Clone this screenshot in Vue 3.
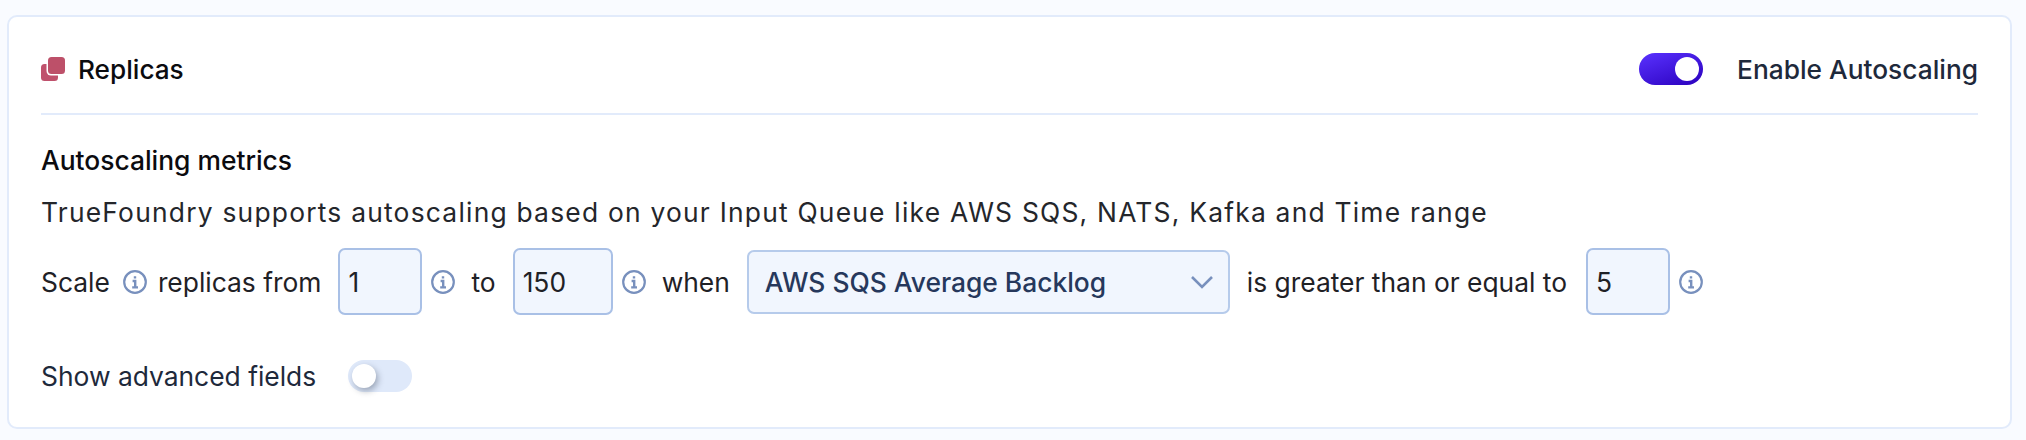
<script setup>
</script>

<template>
  <div class="page">
    <section class="card">
      <header class="head">
        <div class="title">
          <svg class="stack" width="24" height="24" viewBox="0 0 24 24">
            <rect x="0" y="7" width="17" height="17" rx="3.5" fill="#bf516c" />
            <rect x="5.5" y="-1.5" width="20" height="20" rx="4.5" fill="#fff" />
            <rect x="7" y="0" width="17" height="17" rx="3.5" fill="#bd5069" />
          </svg>
          <span>Replicas</span>
        </div>
        <div class="auto">
          <span class="toggle on"><i></i></span>
          <span>Enable Autoscaling</span>
        </div>
      </header>
      <h3>Autoscaling metrics</h3>
      <p class="desc">TrueFoundry supports autoscaling based on your Input Queue like AWS SQS, NATS, Kafka and Time range</p>
      <div class="rule">
        <span class="w-scale">Scale</span>
        <svg class="info" viewBox="0 0 24 24"><circle cx="12" cy="12" r="10.8" /><path class="glyph" d="M12 6.2v2.4M9.6 11h2.6v5.8M9.2 17.4h5.8" /></svg>
        <span class="w-from">replicas from</span>
        <div class="field f1">1</div>
        <svg class="info" viewBox="0 0 24 24"><circle cx="12" cy="12" r="10.8" /><path class="glyph" d="M12 6.2v2.4M9.6 11h2.6v5.8M9.2 17.4h5.8" /></svg>
        <span class="w-to">to</span>
        <div class="field f2">150</div>
        <svg class="info" viewBox="0 0 24 24"><circle cx="12" cy="12" r="10.8" /><path class="glyph" d="M12 6.2v2.4M9.6 11h2.6v5.8M9.2 17.4h5.8" /></svg>
        <span class="w-when">when</span>
        <div class="select">
          <span>AWS SQS Average Backlog</span>
          <svg width="22" height="14" viewBox="0 0 22 14"><path d="M1 2l10 10L21 2" fill="none" stroke="#7890bd" stroke-width="2.6" /></svg>
        </div>
        <span class="w-gt">is greater than or equal to</span>
        <div class="field f1">5</div>
        <svg class="info" viewBox="0 0 24 24"><circle cx="12" cy="12" r="10.8" /><path class="glyph" d="M12 6.2v2.4M9.6 11h2.6v5.8M9.2 17.4h5.8" /></svg>
      </div>
      <div class="adv">
        <span>Show advanced fields</span>
        <span class="toggle off"><i></i></span>
      </div>
    </section>
  </div>
</template>

<style>
html, body { background: #f9fbff; }
</style>

<style scoped>
.page { padding: 15px 14px 11px 7px; font-family: Inter, "Liberation Sans", sans-serif; }
.card {
  box-sizing: border-box; height: 414px; background: #fff;
  border: 2px solid #e2ebfb; border-radius: 10px; padding: 0 32px;
}
.head {
  height: 98px; border-bottom: 2px solid #e2ebfb; box-sizing: border-box;
  display: flex; justify-content: space-between; align-items: center;
  padding: 26px 0 18px;
}
.title { display: flex; align-items: center; gap: 13px; font-size: 26.2px; font-weight: 500; color: #0b0b0f; }
.stack { display: block; overflow: visible; }
.auto { display: flex; align-items: center; gap: 34px; font-size: 26.3px; font-weight: 500; color: #1e293b; }
.toggle { display: block; box-sizing: border-box; width: 64px; height: 32px; border-radius: 16px; padding: 4px; flex: none; }
.toggle i { display: block; width: 24px; height: 24px; border-radius: 50%; background: #fff; }
.on { background: linear-gradient(160deg, #5a32ff 0%, #2a00bd 100%); }
.on i { margin-left: 32px; }
.off { background: #dfe9fa; }
.off i { box-shadow: 2px 3px 6px rgba(30, 41, 59, .35); }
h3 { margin: 29px 0 0; font-size: 26.4px; line-height: 32px; font-weight: 500; color: #0b0b0f; }
.desc { margin: 20px 0 0; font-size: 26.4px; line-height: 32px; color: #24262b; letter-spacing: 1.22px; white-space: nowrap; }
.rule { display: flex; align-items: center; margin-top: 20px; height: 67px; font-size: 26.4px; color: #1f2126; white-space: nowrap; }
.info { width: 24px; height: 24px; fill: none; stroke: #7890bd; stroke-width: 2.2; flex: none; }
.glyph { stroke-width: 2.4; }
.w-scale { margin-right: 13px; }
.w-from { margin: 0 17px 0 11px; }
.w-to { margin: 0 17px 0 16px; }
.w-when { margin: 0 17px 0 16px; }
.w-gt { margin: 0 19px 0 17px; }
.field {
  box-sizing: border-box; height: 67px; background: #f1f6fe; border: 2px solid #a9c0e6; border-radius: 7px;
  display: flex; align-items: center; padding-left: 8px; margin-right: 9px; flex: none;
}
.f1 { width: 84px; }
.f2 { width: 100px; }
.select {
  box-sizing: border-box; width: 483px; height: 64px; background: #f1f6fe; border: 2px solid #b6cbeb; border-radius: 7px;
  display: flex; align-items: center; justify-content: space-between; padding: 0 15px 0 16px; color: #26385c; font-weight: 500; flex: none;
}
.adv { display: flex; align-items: center; gap: 32px; margin-top: 45px; font-size: 26.4px; color: #1e293b; }
</style>
